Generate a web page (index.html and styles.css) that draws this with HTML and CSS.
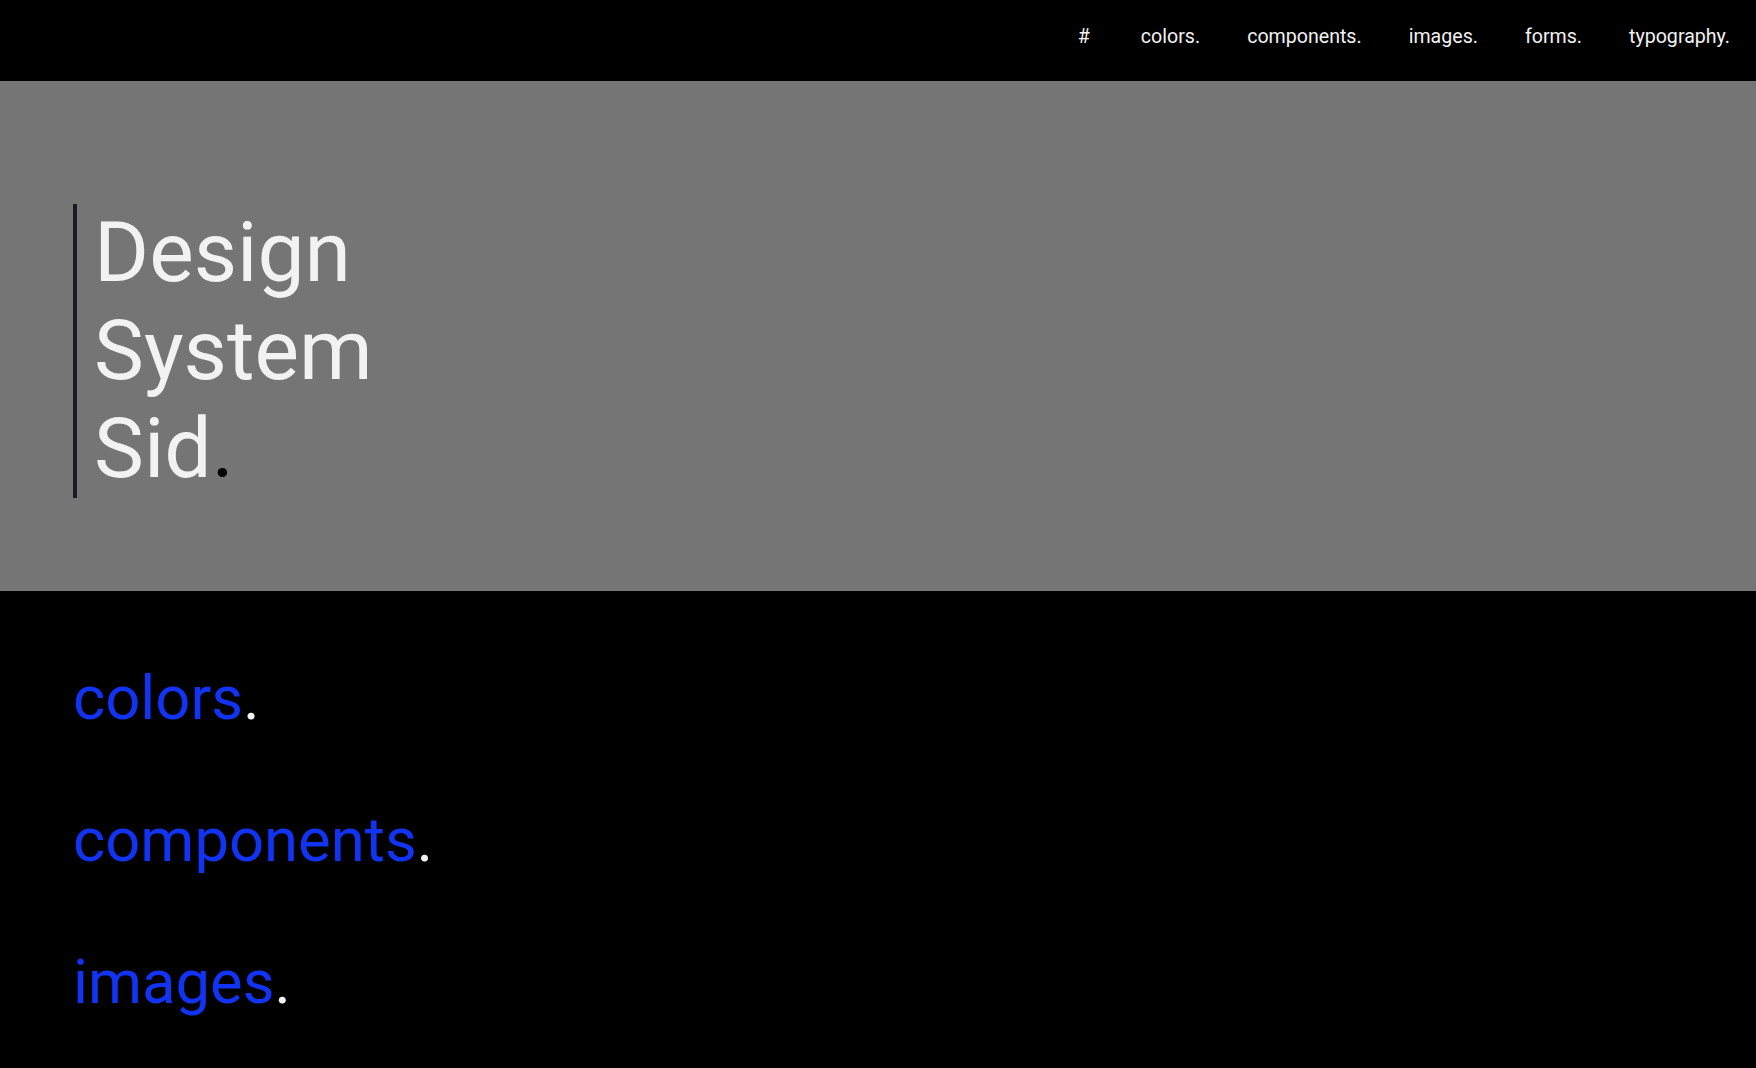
FILE: index.html
```html
<!DOCTYPE html>
<html lang="en">
<head>
<meta charset="utf-8">
<title>Design System Sid.</title>
<link rel="stylesheet" href="styles.css">
</head>
<body>
<header class="topbar">
  <nav class="nav">
    <a class="nav-link" href="#">#</a>
    <a class="nav-link" href="#colors">colors.</a>
    <a class="nav-link" href="#components">components.</a>
    <a class="nav-link" href="#images">images.</a>
    <a class="nav-link" href="#forms">forms.</a>
    <a class="nav-link" href="#typography">typography.</a>
  </nav>
</header>
<section class="hero">
  <h1 class="hero-title">Design<br>System<br>Sid<span class="dot-dark">.</span></h1>
</section>
<main class="sections">
  <h2 class="section-title" id="colors">colors<span class="dot-light">.</span></h2>
  <h2 class="section-title" id="components">components<span class="dot-light">.</span></h2>
  <h2 class="section-title" id="images">images<span class="dot-light">.</span></h2>
</main>
</body>
</html>
```
FILE: styles.css
```css
* { box-sizing: border-box; }
html, body {
  margin: 0;
  padding: 0;
  background: #000;
  font-family: Roboto, "Liberation Sans", Arial, sans-serif;
}
body { height: 1068px; overflow: hidden; }

.topbar {
  height: 81px;
  background: #000;
  display: flex;
  align-items: center;
  justify-content: flex-end;
  padding: 0 26px 7px 0;
}
.nav {
  display: flex;
  gap: 47px;
  align-items: center;
}
.nav-link {
  color: #f2f2f2;
  text-decoration: none;
  font-size: 19.6px;
  line-height: 1;
}
.nav-link:first-child { margin-right: 4px; }

.hero {
  height: 510px;
  background: #757575;
  padding: 123px 0 0 73px;
}
.hero-title {
  margin: 0;
  border-left: 4px solid #181b22;
  padding-left: 17px;
  font-size: 84px;
  font-weight: 400;
  line-height: 98px;
  color: #f2f2f2;
}
.dot-dark { color: #000; }

.sections {
  display: flex;
  flex-direction: column;
  gap: 67px;
  padding: 70px 0 0 73px;
}
.section-title {
  margin: 0;
  font-size: 61.6px;
  font-weight: 400;
  line-height: 75px;
  color: #1133f4;
}
.dot-light { color: #f2f2f2; }
```
